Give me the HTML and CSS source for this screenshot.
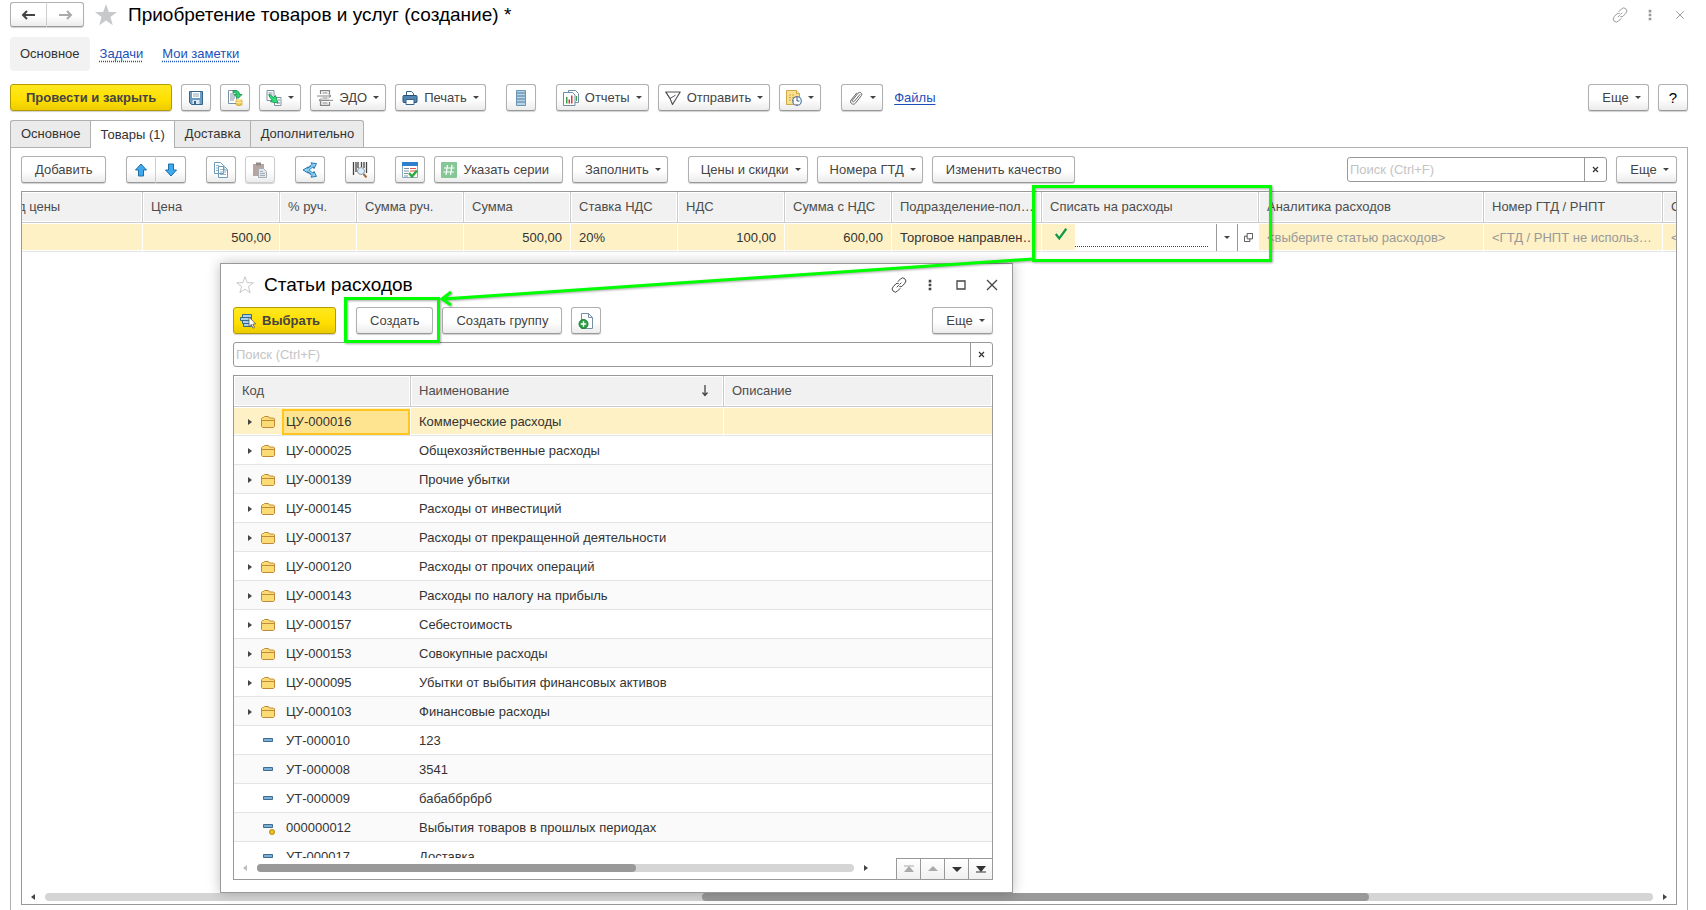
FILE: index.html
```html
<!DOCTYPE html>
<html lang="ru">
  <head>
    <meta charset="utf-8">
    <meta name="viewport" content="width=device-width">
    <title>Приобретение товаров и услуг (создание) *</title>
    <link rel="stylesheet" href="styles.css">
  </head>
  <body>
    <!-- icons -->
    <svg class="sprite" aria-hidden="true">
      <symbol id="i-left" viewBox="0 0 16 16"><path d="M2 8h12M6 4L2 8l4 4" fill="none" stroke="currentColor" stroke-width="2"/></symbol>
      <symbol id="i-right" viewBox="0 0 16 16"><path d="M2 8h12M10 4l4 4-4 4" fill="none" stroke="currentColor" stroke-width="2"/></symbol>
      <symbol id="i-star" viewBox="0 0 24 24"><path d="M12 1l2.800 7.900 8.200.2-6.500 5 2.300 8.200L12 17.500l-6.800 4.800 2.300-8.200L1 9.100l8.200-.2z"/></symbol>
      <symbol id="i-link" viewBox="0 0 16 16"><g fill="none" stroke="currentColor" stroke-linecap="round"><path d="M7 4.500l2.500-2.600a2.900 2.900 0 0 1 4.400 4.300L11.300 9a2.800 2.800 0 0 1-2.600.7"/><path d="M9 11.500l-2.500 2.600a2.900 2.900 0 0 1-4.400-4.300L4.700 7a2.800 2.800 0 0 1 2.600-.7M6 10l1.500-1.500M8.700 7.300L10 6"/></g></symbol>
      <symbol id="i-dots" viewBox="0 0 16 16"><path d="M6.500 2h3v3h-3zM6.500 6.500h3v3h-3zM6.500 11h3v3h-3z" fill="currentColor"/></symbol>
      <symbol id="i-close" viewBox="0 0 16 16"><path d="M3 3l10 10M13 3L3 13" stroke="currentColor" stroke-width="1.300"/></symbol>
      <symbol id="i-clear" viewBox="0 0 9 9"><path d="M2 2l5 5M7 2L2 7" stroke="currentColor" stroke-width="1.200"/></symbol>
      <symbol id="i-square" viewBox="0 0 16 16"><path d="M4 4h8v8H4z" fill="none" stroke="currentColor" stroke-width="1.300"/></symbol>
      <symbol id="i-save" viewBox="0 0 16 16"><path d="M1.500 1.500h13v13h-11l-2-2z" fill="#6d9cc0" stroke="#36658c"/><path d="M4 2h8v6H4z" fill="#fff"/><path d="M5 4h6M5 6h6" stroke="#8aa9c0"/><path d="M4.500 10h7v4h-7z" fill="#dce9f2"/><path d="M6 11h2v3H6z" fill="#36658c"/></symbol>
      <symbol id="i-post" viewBox="0 0 16 16"><path d="M1.500.5h8v13h-8z" fill="#fff" stroke="#7d92a3"/><path d="M3 4h4M3 6h5M3 8h5M3 10h4" stroke="#7d92a3"/><path d="M6 .7c5-.5 6.500 1.300 6.500 3.800H15l-4 4-4-4h2.500C9.500 3 8.500 2.500 6 3z" fill="#2fcf70" stroke="#0f8a45" stroke-width=".8"/><path d="M9 10v4.500c0 1.300 6 1.300 6 0V10z" fill="#f2c94f" stroke="#c29a26" stroke-width=".7"/><path d="M9 12c1 1 5 1 6 0" fill="none" stroke="#fff3c0"/><ellipse cx="12" cy="10" rx="3" ry="1" fill="#ffe58a"/></symbol>
      <symbol id="i-based" viewBox="0 0 16 16"><path d="M1 .5h7v10H1zM8.500 7.500h6.500v8H8.500z" fill="#fff" stroke="#7d92a3"/><path d="M2.500 3h4M2.500 5h4M12 10h2M11 13h3" stroke="#7d92a3"/><path d="M3 4l4.500 3.500L9.500 5.500 12 13l-7.500-1.200L6.300 9.700C4.200 8.700 3.300 7 3 4z" fill="#2fe07a" stroke="#0f8a45" stroke-width=".8"/></symbol>
      <symbol id="i-edo" viewBox="0 0 16 16"><path d="M3.500 4V.7h9V4M3.500 12v3.300h9V12" fill="none" stroke="#858585" stroke-width="1.200"/><path d="M5.500 3h5M5.500 8h5M5.500 13h5M4 10.300h8" stroke="#858585"/><path d="M0 6h14M11.500 4L14 6l-2.500 2M16 10.300H2M4.500 8.300L2 10.300l2.500 2" fill="none" stroke="#858585"/></symbol>
      <symbol id="i-print" viewBox="0 0 16 16"><path d="M4.500 6V1.500h5l2 2V6" fill="#fff" stroke="#34638c"/><rect x="1" y="5.500" width="14" height="7" rx="1" fill="#4f86b3" stroke="#284f73"/><path d="M4 9.500h8v5H4z" fill="#fff" stroke="#34638c"/></symbol>
      <symbol id="i-list" viewBox="0 0 16 16"><path d="M3.500.5h9v15h-9z" fill="#b7d3e6" stroke="#6b94b5"/><path d="M4 3h8M4 6h8M4 9h8M4 12h8" stroke="#527ea1" stroke-width="1.200"/></symbol>
      <symbol id="i-report" viewBox="0 0 16 16"><path d="M5.500 3V.5h7l3 3v9H12" fill="#fff" stroke="#6f8da4"/><path d="M.5 2.500h9l2.500 2.500v10.500H.5z" fill="#fff" stroke="#6f8da4"/><path d="M3 7h1.500v6.500H3z" fill="#35a34c"/><path d="M5.500 9.500H7v4H5.500z" fill="#d93b30"/><path d="M8 5.500h1.500v8H8z" fill="#d93b30"/><path d="M13.500 6v5" stroke="#35a34c"/></symbol>
      <symbol id="i-send" viewBox="0 0 16 16"><path d="M.8 2h14.400L7.500 14.500 5 8.500z" fill="none" stroke="#555" stroke-width="1.200" stroke-linejoin="round"/><path d="M.8 2L5 8.500l5.500-3.300" fill="none" stroke="#555"/></symbol>
      <symbol id="i-remind" viewBox="0 0 16 16"><path d="M.5.500h10l3 3v11H.5z" fill="#f8e08e" stroke="#cfa74c"/><path d="M10.500.5v3h3" fill="#fff3c4" stroke="#cfa74c"/><path d="M3 5h5M3 7.500h6M3 10h4" stroke="#cfa74c" stroke-dasharray="2 1"/><circle cx="11" cy="11" r="4.300" fill="#fff" stroke="#5580a8" stroke-width="1.200"/><path d="M11 8v3h2.500" fill="none" stroke="#315f89"/><path d="M10.500 7h1v1h-1zM10.500 14h1v1h-1zM7.200 10.500h1v1h-1z" fill="#e03030"/></symbol>
      <symbol id="i-clip" viewBox="0 0 16 16"><path d="M12 4.500L6.300 11.300c-1 1.200-2.600-.1-1.700-1.300l5.600-6.900c1.700-2 4.800.4 3.200 2.500l-6 7.600c-2.300 2.700-6.400-.4-4.200-3.300l5.500-6.800" fill="none" stroke="#666" stroke-linecap="round"/></symbol>
      <symbol id="i-up" viewBox="0 0 16 16"><path d="M8 2l5.500 6h-3v6h-5V8h-3z" fill="#3ea9ec" stroke="#1e6ea8"/></symbol>
      <symbol id="i-down" viewBox="0 0 16 16"><path d="M8 14l5.500-6h-3V2h-5v6h-3z" fill="#3ea9ec" stroke="#1e6ea8"/></symbol>
      <symbol id="i-copy" viewBox="0 0 16 16"><path d="M1.500.5h6l3 3v8h-9zM5.500 4.500h6l3 3v8h-9z" fill="#fff" stroke="#6c9bb8"/><path d="M11 4.500v3.500h3.500" fill="none" stroke="#6c9bb8"/><path d="M7 7.500h3M7 10h6M7 12.500h6M3 3.500h3M3 6h2M3 8.500h2" stroke="#8fb4ca"/></symbol>
      <symbol id="i-paste" viewBox="0 0 16 16"><path d="M1 2h11v12H1z" fill="#b5a79f"/><path d="M4 .5h5v3H4z" fill="#8f8a88"/><path d="M6.500 6.500h5l3 3v6h-8z" fill="#e2e6ea" stroke="#a5adb5"/><path d="M8 9.500h3M8 11.500h5M8 13.500h5" stroke="#a5adb5"/></symbol>
      <symbol id="i-share" viewBox="0 0 16 16"><path d="M5 8l5-4M5 8l5 4" fill="none" stroke="#2878ac" stroke-width="3.500"/><path d="M9 .8l5.500.8-2.500 5zM9 15.200l5.500-.8-2.500-5zM1 8l5-3v6z" fill="#8fd3f7" stroke="#2878ac"/><path d="M4 8h1.500L11 3.500M5.500 8l5.500 4.500" fill="none" stroke="#8fd3f7" stroke-width="1.500"/></symbol>
      <symbol id="i-barcode" viewBox="0 0 16 16"><path d="M1.500 0v13M4 0v10M6 0v6M9.500 0v5M12 0v6M14.500 0v11" stroke="#444" stroke-width="1.300"/><path d="M11.500 12l3 3.500" stroke="#a3683c" stroke-width="2"/><circle cx="9" cy="9" r="3.500" fill="#d9ecf8" stroke="#8d9aa5"/></symbol>
      <symbol id="i-check-list" viewBox="0 0 16 16"><path d="M.5.500h15v15H.5z" fill="#fff" stroke="#8da9be"/><path d="M0 0h16v4H0z" fill="#2f80cc"/><path d="M2 6.500h5M2 9h5M2 11.500h4M2 14h4" stroke="#7d92a3"/><path d="M8 6.500h6M8 9h6" stroke="#e25a46"/><path d="M7 11l3 3.500 5-6" fill="none" stroke="#2eaa3e" stroke-width="2.500"/></symbol>
      <symbol id="i-series" viewBox="0 0 16 16"><rect width="16" height="16" rx="1" fill="#86c796"/><path d="M6.500 3l-1.500 10M11 3L9.500 13M3 6h10.500M2.500 10H13" stroke="#fff" stroke-width="1.200"/></symbol>
      <symbol id="i-tick" viewBox="0 0 16 16"><path d="M2 8l4 5 8-11" fill="none" stroke="#0c9a48" stroke-width="2.500"/></symbol>
      <symbol id="i-open" viewBox="0 0 10 10"><path d="M3.500.5h6v6h-6zM3.500 3.500h-3v6h6v-3" fill="none" stroke="#444"/></symbol>
      <symbol id="i-choose" viewBox="0 0 16 16"><path d="M2.500 1.500h9v3h-9zM.5 4.500h11v3H.5zM2.500 7.500h9v3h-9zM3.500 10.500h8v3h-8z" fill="#a9d0ea" stroke="#356a91"/><path d="M9 4v9.500l2.300-2 1.700 3.700 1.500-.7-1.600-3.500h2.800z" fill="#fff" stroke="#555" stroke-width=".8"/></symbol>
      <symbol id="i-newdoc" viewBox="0 0 16 16"><path d="M3.500.5h7l4 4v11h-11z" fill="#fff" stroke="#7590a6"/><path d="M10.500.5v4h4" fill="none" stroke="#7590a6"/><circle cx="5.500" cy="11" r="4.500" fill="#2f9e49" stroke="#1c7a33"/><path d="M5.500 8.300v5.400M2.800 11h5.400" stroke="#fff" stroke-width="1.400"/></symbol>
      <symbol id="i-folder" viewBox="0 0 14 12"><path d="M.5 10.500v-8l1-1h1l1-1h4l1 1.500h4l1 1v7.500l-1 1h-11z" fill="#fbdc74" stroke="#c08a3a"/><path d="M1 4.500h12" stroke="#c08a3a"/></symbol>
      <symbol id="i-item" viewBox="0 0 14 14"><path d="M2.500 4.500h9v3h-9z" fill="#7db0d8" stroke="#3f6d92"/></symbol>
      <symbol id="i-item-pre" viewBox="0 0 14 14"><path d="M2.500 3.500h9v3h-9z" fill="#7db0d8" stroke="#3f6d92"/><circle cx="11" cy="11" r="2.500" fill="#f0c020" stroke="#b08a10"/></symbol>
      <symbol id="i-sort" viewBox="0 0 8 12"><path d="M4 0v10M1.500 7.500L4 10.500l2.500-3" fill="none" stroke="#444" stroke-width="1.300"/></symbol>
      <symbol id="i-first" viewBox="0 0 10 8"><path d="M0 1h10" stroke="currentColor"/><path d="M5 1l5 6H0z" fill="currentColor"/></symbol>
      <symbol id="i-prev" viewBox="0 0 10 8"><path d="M5 1l5 5H0z" fill="currentColor"/></symbol>
      <symbol id="i-next" viewBox="0 0 10 8"><path d="M5 7l5-5H0z" fill="currentColor"/></symbol>
      <symbol id="i-last" viewBox="0 0 10 8"><path d="M0 7h10" stroke="currentColor"/><path d="M5 7l5-6H0z" fill="currentColor"/></symbol>
    </svg>

    <header class="titlebar">
      <div class="btn-pair">
        <button class="btn" aria-label="Назад"><svg class="icon"><use href="#i-left"/></svg></button>
        <button class="btn muted" aria-label="Вперед"><svg class="icon"><use href="#i-right"/></svg></button>
      </div>
      <svg class="star"><use href="#i-star"/></svg>
      <h1>Приобретение товаров и услуг (создание) *</h1>
      <div class="win-icons pale">
        <button aria-label="Ссылка"><svg class="icon"><use href="#i-link"/></svg></button>
        <button aria-label="Меню"><svg class="icon small"><use href="#i-dots"/></svg></button>
        <button aria-label="Закрыть"><svg class="icon close"><use href="#i-close"/></svg></button>
      </div>
    </header>

    <nav class="sections">
      <span class="section-active">Основное</span>
      <a href="#">Задачи</a>
      <a href="#">Мои заметки</a>
    </nav>

    <div class="toolbar main-toolbar">
      <div class="group">
        <button class="btn btn-yellow">Провести и закрыть</button>
        <button class="btn btn-icon" aria-label="Записать"><svg class="icon"><use href="#i-save"/></svg></button>
        <button class="btn btn-icon" aria-label="Провести"><svg class="icon"><use href="#i-post"/></svg></button>
        <button class="btn with-icon drop" aria-label="Создать на основании"><svg class="icon"><use href="#i-based"/></svg></button>
        <button class="btn with-icon drop"><svg class="icon"><use href="#i-edo"/></svg>ЭДО</button>
        <button class="btn with-icon drop"><svg class="icon"><use href="#i-print"/></svg>Печать</button>
      </div>
      <div class="group">
        <button class="btn btn-icon" aria-label="Список"><svg class="icon"><use href="#i-list"/></svg></button>
      </div>
      <div class="group">
        <button class="btn with-icon drop"><svg class="icon"><use href="#i-report"/></svg>Отчеты</button>
        <button class="btn with-icon drop"><svg class="icon"><use href="#i-send"/></svg>Отправить</button>
        <button class="btn with-icon drop" aria-label="Напоминание"><svg class="icon"><use href="#i-remind"/></svg></button>
      </div>
      <div class="group">
        <button class="btn with-icon drop" aria-label="Вложения"><svg class="icon"><use href="#i-clip"/></svg></button>
        <a class="files" href="#">Файлы</a>
      </div>
      <div class="group push">
        <button class="btn drop">Еще</button>
        <button class="btn btn-icon help">?</button>
      </div>
    </div>

    <div class="tabs">
      <button class="tab">Основное</button>
      <button class="tab tab-active">Товары (1)</button>
      <button class="tab">Доставка</button>
      <button class="tab">Дополнительно</button>
    </div>

    <main class="panel">
      <div class="toolbar">
        <div class="group">
          <button class="btn">Добавить</button>
        </div>
        <div class="btn-pair">
          <button class="btn" aria-label="Вверх"><svg class="icon"><use href="#i-up"/></svg></button>
          <button class="btn" aria-label="Вниз"><svg class="icon"><use href="#i-down"/></svg></button>
        </div>
        <div class="group">
          <button class="btn btn-icon" aria-label="Копировать"><svg class="icon"><use href="#i-copy"/></svg></button>
          <button class="btn btn-icon" aria-label="Вставить" disabled><svg class="icon"><use href="#i-paste"/></svg></button>
        </div>
        <div class="group">
          <button class="btn btn-icon" aria-label="Разбить строку"><svg class="icon"><use href="#i-share"/></svg></button>
        </div>
        <div class="group">
          <button class="btn btn-icon" aria-label="Поиск по штрихкоду"><svg class="icon"><use href="#i-barcode"/></svg></button>
        </div>
        <div class="group">
          <button class="btn btn-icon" aria-label="Проверить"><svg class="icon"><use href="#i-check-list"/></svg></button>
          <button class="btn with-icon"><svg class="icon"><use href="#i-series"/></svg>Указать серии</button>
          <button class="btn drop">Заполнить</button>
        </div>
        <div class="group">
          <button class="btn drop">Цены и скидки</button>
          <button class="btn drop">Номера ГТД</button>
          <button class="btn">Изменить качество</button>
        </div>
        <div class="group push">
          <div class="search search-goods">
            <input type="text" placeholder="Поиск (Ctrl+F)" aria-label="Поиск товаров">
            <button aria-label="Очистить"><svg class="icon tiny"><use href="#i-clear"/></svg></button>
          </div>
          <button class="btn drop">Еще</button>
        </div>
      </div>

      <div class="grid-box goods">
        <div class="grid-view">
          <table class="grid goods-table">
            <colgroup>
              <col style="width: 149px"><col style="width: 137px"><col style="width: 77px"><col style="width: 107px"><col style="width: 107px"><col style="width: 107px"><col style="width: 107px"><col style="width: 107px"><col style="width: 150px"><col style="width: 217px"><col style="width: 225px"><col style="width: 179px"><col style="width: 150px">
            </colgroup>
            <thead>
              <tr><th>Вид цены</th><th>Цена</th><th>% руч.</th><th>Сумма руч.</th><th>Сумма</th><th>Ставка НДС</th><th>НДС</th><th>Сумма с НДС</th><th class="tight">Подразделение-получатель</th><th>Списать на расходы</th><th>Аналитика расходов</th><th>Номер ГТД / РНПТ</th><th>Страна</th></tr>
            </thead>
            <tbody>
              <tr class="selected">
                <td></td><td class="num">500,00</td><td></td><td></td><td class="num">500,00</td><td>20%</td><td class="num">100,00</td><td class="num">600,00</td><td class="tight">Торговое направление (опт)</td>
                <td class="edit-cell">
                  <div class="editor">
                    <span class="tick"><svg class="icon small"><use href="#i-tick"/></svg></span>
                    <label class="field"><input type="text" aria-label="Списать на расходы"></label>
                    <button class="drop" aria-label="Выбрать из списка"></button>
                    <button aria-label="Открыть"><svg class="icon tiny"><use href="#i-open"/></svg></button>
                  </div>
                </td>
                <td class="hint">&lt;выберите статью расходов&gt;</td><td class="hint">&lt;ГТД / РНПТ не используется&gt;</td><td class="hint">&lt;не указана&gt;</td>
              </tr>
            </tbody>
          </table>
        </div>
        <div class="scrollbar">
          <i class="arrow-left"></i>
          <div class="track"><div class="thumb" style="margin-left: 657px; width: 667px"></div></div>
          <i class="arrow-right"></i>
        </div>
      </div>
    </main>

    <section class="dialog">
      <div class="dialog-title">
        <svg class="star star-empty"><use href="#i-star"/></svg>
        <h2>Статьи расходов</h2>
        <div class="win-icons">
          <button aria-label="Ссылка"><svg class="icon"><use href="#i-link"/></svg></button>
          <button aria-label="Меню"><svg class="icon small"><use href="#i-dots"/></svg></button>
          <button aria-label="Развернуть"><svg class="icon"><use href="#i-square"/></svg></button>
          <button aria-label="Закрыть"><svg class="icon"><use href="#i-close"/></svg></button>
        </div>
      </div>
      <div class="toolbar">
        <div class="group">
          <button class="btn btn-yellow with-icon"><svg class="icon"><use href="#i-choose"/></svg>Выбрать</button>
        </div>
        <div class="group">
          <button class="btn">Создать</button>
          <button class="btn">Создать группу</button>
          <button class="btn btn-icon" aria-label="Создать копированием"><svg class="icon"><use href="#i-newdoc"/></svg></button>
        </div>
        <div class="group push">
          <button class="btn drop">Еще</button>
        </div>
      </div>
      <div class="search">
        <input type="text" placeholder="Поиск (Ctrl+F)" aria-label="Поиск статей">
        <button aria-label="Очистить"><svg class="icon tiny"><use href="#i-clear"/></svg></button>
      </div>
      <div class="grid-box">
        <div class="grid-view list-view">
          <table class="grid list-table">
            <colgroup><col style="width: 177px"><col style="width: 313px"><col></colgroup>
            <thead>
              <tr><th>Код</th><th><div class="sorted">Наименование<svg><use href="#i-sort"/></svg></div></th><th>Описание</th></tr>
            </thead>
            <tbody>
              <tr class="selected"><td><div class="code"><i class="arrow-right"></i><svg><use href="#i-folder"/></svg><span>ЦУ-000016</span></div></td><td>Коммерческие расходы</td><td></td></tr>
              <tr><td><div class="code"><i class="arrow-right"></i><svg><use href="#i-folder"/></svg><span>ЦУ-000025</span></div></td><td>Общехозяйственные расходы</td><td></td></tr>
              <tr><td><div class="code"><i class="arrow-right"></i><svg><use href="#i-folder"/></svg><span>ЦУ-000139</span></div></td><td>Прочие убытки</td><td></td></tr>
              <tr><td><div class="code"><i class="arrow-right"></i><svg><use href="#i-folder"/></svg><span>ЦУ-000145</span></div></td><td>Расходы от инвестиций</td><td></td></tr>
              <tr><td><div class="code"><i class="arrow-right"></i><svg><use href="#i-folder"/></svg><span>ЦУ-000137</span></div></td><td>Расходы от прекращенной деятельности</td><td></td></tr>
              <tr><td><div class="code"><i class="arrow-right"></i><svg><use href="#i-folder"/></svg><span>ЦУ-000120</span></div></td><td>Расходы от прочих операций</td><td></td></tr>
              <tr><td><div class="code"><i class="arrow-right"></i><svg><use href="#i-folder"/></svg><span>ЦУ-000143</span></div></td><td>Расходы по налогу на прибыль</td><td></td></tr>
              <tr><td><div class="code"><i class="arrow-right"></i><svg><use href="#i-folder"/></svg><span>ЦУ-000157</span></div></td><td>Себестоимость</td><td></td></tr>
              <tr><td><div class="code"><i class="arrow-right"></i><svg><use href="#i-folder"/></svg><span>ЦУ-000153</span></div></td><td>Совокупные расходы</td><td></td></tr>
              <tr><td><div class="code"><i class="arrow-right"></i><svg><use href="#i-folder"/></svg><span>ЦУ-000095</span></div></td><td>Убытки от выбытия финансовых активов</td><td></td></tr>
              <tr><td><div class="code"><i class="arrow-right"></i><svg><use href="#i-folder"/></svg><span>ЦУ-000103</span></div></td><td>Финансовые расходы</td><td></td></tr>
              <tr><td><div class="code leaf"><svg><use href="#i-item"/></svg><span>УТ-000010</span></div></td><td>123</td><td></td></tr>
              <tr><td><div class="code leaf"><svg><use href="#i-item"/></svg><span>УТ-000008</span></div></td><td>3541</td><td></td></tr>
              <tr><td><div class="code leaf"><svg><use href="#i-item"/></svg><span>УТ-000009</span></div></td><td>бабаббрбрб</td><td></td></tr>
              <tr><td><div class="code leaf"><svg><use href="#i-item-pre"/></svg><span>000000012</span></div></td><td>Выбытия товаров в прошлых периодах</td><td></td></tr>
              <tr><td><div class="code leaf"><svg><use href="#i-item"/></svg><span>УТ-000017</span></div></td><td>Доставка</td><td></td></tr>
            </tbody>
          </table>
        </div>
        <div class="list-footer">
          <div class="scrollbar">
            <i class="arrow-left off"></i>
            <div class="track"><div class="thumb" style="width: 379px"></div></div>
            <i class="arrow-right"></i>
          </div>
          <div class="pager">
            <button aria-label="В начало" disabled><svg><use href="#i-first"/></svg></button>
            <button aria-label="Назад" disabled><svg><use href="#i-prev"/></svg></button>
            <button aria-label="Далее"><svg><use href="#i-next"/></svg></button>
            <button aria-label="В конец"><svg><use href="#i-last"/></svg></button>
          </div>
        </div>
      </div>
    </section>

    <!-- green marks over the form -->
    <svg class="marks" aria-hidden="true">
      <rect x="1033.500" y="186.500" width="237" height="74"/>
      <rect x="345.500" y="298.500" width="93" height="43"/>
      <path d="M1033 259L443 299M451 292l-9 7 9 6"/>
    </svg>
  </body>
</html>
```

FILE: styles.css
```css
* {
  margin: 0;
  box-sizing: border-box;
}
body {
  min-height: 100vh;
  display: flex;
  flex-direction: column;
  padding: 0 18px 0 10px;
  background-color: white;
  color: #333333;
  font-family: "Liberation Sans", Arial, sans-serif;
  font-size: 13px;
  line-height: 16px;
  position: relative;
  overflow: hidden;
}
button, input {
  font: inherit;
  color: inherit;
}
button {
  cursor: pointer;
}
a {
  color: #1d4fb8;
}
h1, h2 {
  font-size: 19px;
  line-height: 24px;
  font-weight: 400;
  color: black;
}
.sprite {
  position: absolute;
  width: 0;
  height: 0;
}
.icon {
  width: 16px;
  height: 16px;
  flex-shrink: 0;
}
.icon.small {
  width: 14px;
  height: 14px;
}
.icon.close {
  width: 12px;
  height: 12px;
}
.icon.tiny {
  width: 9px;
  height: 9px;
}

/* buttons */
.btn {
  height: 27px;
  padding: 0 13px;
  display: flex;
  align-items: center;
  justify-content: center;
  border: 1px solid #b0b0b0;
  border-bottom-color: #999999;
  border-radius: 3px;
  background: linear-gradient(white 55%, #ececec);
  box-shadow: 0 1px 1px #d0d0d0;
  color: #444444;
  white-space: nowrap;
}
.btn-icon {
  width: 30px;
  padding: 0;
}
.btn.drop {
  padding: 0 6px 0 12px;
}
.btn.with-icon {
  padding-left: 6px;
  gap: 6px;
}
.push .btn.drop {
  width: 61px;
}
.drop::after {
  content: "";
  border: 3px solid transparent;
  border-top-color: #444444;
  border-bottom: 0;
  margin-left: 6px;
}
.drop.with-icon::after {
  margin-left: 0;
}
.btn:disabled {
  border-color: #cccccc;
}
.btn-yellow {
  padding: 0 15px;
  border-color: #b59b00;
  background: linear-gradient(#ffe81f, #ffdf00 60%, #eccb00);
  font-weight: 700;
}
.help {
  font-size: 15px;
  color: black;
}
.muted {
  color: #aaaaaa;
}
.btn-pair {
  display: flex;
}
.btn-pair .btn {
  width: 30px;
  padding: 0;
  border-radius: 0 3px 3px 0;
}
.btn-pair .btn:first-child {
  border-right: 1px solid #cccccc;
  border-radius: 3px 0 0 3px;
}
.btn-pair .btn:last-child {
  border-left: 0;
}

/* title */
.titlebar {
  height: 29px;
  display: flex;
  align-items: center;
}
.titlebar .btn-pair .btn {
  width: 37px;
  height: 25px;
}
.star {
  width: 24px;
  height: 24px;
  margin: 0 10px;
  fill: #c8c9cb;
}
.star-empty {
  width: 18px;
  height: 18px;
  margin: 0 10px 0 3px;
  fill: none;
  stroke: #b5b5b5;
}
.win-icons {
  margin-left: auto;
  display: flex;
  align-items: center;
  gap: 9px;
}
.win-icons button {
  width: 22px;
  height: 22px;
  padding: 0;
  display: flex;
  align-items: center;
  justify-content: center;
  border: 0;
  background: none;
  color: #444444;
}
.win-icons.pale {
  gap: 8px;
  margin-right: -3px;
}
.win-icons.pale button {
  color: #999999;
}
.sections {
  margin-top: 8px;
  display: flex;
  align-items: center;
}
.sections a {
  margin-left: 19px;
  text-decoration: underline dotted;
  text-underline-offset: 3px;
}
.section-active {
  padding: 9px 10px;
  border-radius: 4px;
  background-color: #f2f2f2;
}
.sections .section-active + a {
  margin-left: 10px;
}

/* toolbars */
.toolbar {
  display: flex;
  align-items: center;
  gap: 20px;
}
.group {
  display: flex;
  align-items: center;
  gap: 9px;
}
.push {
  margin-left: auto;
}
.main-toolbar {
  margin-top: 13px;
}
.files {
  margin-left: 2px;
  text-underline-offset: 2px;
}

/* tabs */
.tabs {
  margin-top: 9px;
  display: flex;
}
.tab {
  height: 27px;
  padding: 0 9px 0 10px;
  border: 1px solid #b0b0b0;
  border-bottom: 0;
  border-right: 0;
  background-color: #ebebeb;
}
.tab:first-child {
  border-radius: 3px 0 0 0;
}
.tab:last-child {
  border-right: 1px solid #b0b0b0;
  border-radius: 0 3px 0 0;
}
.tab-active {
  height: 28px;
  margin-bottom: -1px;
  background-color: white;
  position: relative;
}
.panel {
  flex-grow: 1;
  display: flex;
  flex-direction: column;
  padding: 8px 10px 5px;
  border: 1px solid #b0b0b0;
  border-bottom: 0;
}

/* search */
.search {
  height: 25px;
  display: flex;
  border: 1px solid #999999;
  border-radius: 3px;
}
.search-goods {
  width: 260px;
}
.search input {
  flex-grow: 1;
  min-width: 0;
  padding: 0 2px;
  border: 0;
  outline: none;
  background: none;
}
.search input::placeholder {
  color: #c4c4c4;
}
.search button {
  width: 22px;
  padding: 0;
  border: 0;
  border-left: 1px solid #999999;
  background: none;
}

/* tables */
.grid-box {
  display: flex;
  flex-direction: column;
  border: 1px solid #999999;
}
.goods {
  flex-grow: 1;
  margin-top: 8px;
}
.grid-view {
  flex-grow: 1;
  overflow: hidden;
}
.grid {
  table-layout: fixed;
  border-collapse: separate;
  border-spacing: 0;
}
.goods-table {
  width: 1819px;
  margin-left: -28px;
}
.list-table {
  width: 100%;
}
.grid th, .grid td {
  padding: 0 8px;
  text-align: left;
  font-weight: 400;
  white-space: nowrap;
  overflow: hidden;
  text-overflow: ellipsis;
}
.grid th {
  height: 31px;
  border-right: 1px solid #cccccc;
  border-bottom: 1px solid #cccccc;
  background-color: #f1f1f1;
  box-shadow: inset 1px 1px 0 white, inset -1px -1px 0 white;
  color: #4d4d4d;
}
.grid td {
  height: 29px;
  padding-top: 1px;
  border-bottom: 1px solid #e4e4e4;
}
.grid tr:nth-child(odd) td {
  background-color: #fafafa;
}
.grid tr.selected td {
  border-right: 1px solid white;
  background-color: #fdf1c5;
  box-shadow: inset 0 1px 0 white, inset 0 -1px 0 white;
}
.list-table th:last-child, .list-table tr.selected td:last-child {
  border-right: 0;
}
.grid .tight {
  padding-right: 3px;
}
.grid .num {
  text-align: right;
}
.grid .hint {
  color: #999999;
}
.grid .edit-cell {
  padding: 0;
}
.editor {
  height: 27px;
  display: flex;
}
.tick {
  width: 33px;
  flex-shrink: 0;
  padding: 3px 0 0 12px;
}
.field {
  flex-grow: 1;
  min-width: 0;
  padding: 0 8px 4px 0;
  background-color: white;
}
.field input {
  width: 100%;
  height: 23px;
  padding: 0;
  border: 0;
  border-bottom: 1px dotted #e00000;
  outline: none;
}
.editor button {
  width: 21px;
  flex-shrink: 0;
  padding: 0;
  display: flex;
  align-items: center;
  justify-content: center;
  border: 0;
  border-left: 1px solid #999999;
  background-color: white;
}
.editor .drop::after {
  margin: 0;
}

/* scrollbars */
.scrollbar {
  height: 10px;
  flex-grow: 1;
  display: flex;
  align-items: center;
}
.goods .scrollbar {
  flex-grow: 0;
  height: 14px;
  padding: 0 9px;
}
.track {
  flex-grow: 1;
  height: 8px;
  margin: 0 10px;
  border-radius: 4px;
  background-color: #d5d5d5;
}
.thumb {
  height: 8px;
  border-radius: 4px;
  background-color: #999999;
}
.arrow-left, .arrow-right {
  border: 3px solid transparent;
  flex-shrink: 0;
}
.arrow-left {
  border-right: 4px solid #444444;
  border-left: 0;
}
.arrow-left.off {
  border-right-color: #bbbbbb;
}
.arrow-right {
  border-left: 4px solid #444444;
  border-right: 0;
}

/* dialog window */
.dialog {
  width: 793px;
  padding: 7px 19px 12px 12px;
  position: absolute;
  left: 220px;
  top: 263px;
  border: 1px solid #999999;
  background-color: white;
  box-shadow: 0 0 12px rgba(0, 0, 0, 0.25);
}
.dialog-title {
  height: 28px;
  display: flex;
  align-items: center;
}
.dialog-title .win-icons {
  margin-right: -10px;
}
.dialog > .toolbar {
  margin-top: 8px;
}
.dialog > .search {
  margin-top: 8px;
}
.dialog > .grid-box {
  margin-top: 8px;
}
.list-view {
  height: 482px;
}
.sorted {
  display: flex;
  justify-content: space-between;
  align-items: center;
  padding-right: 6px;
}
.sorted svg {
  width: 8px;
  height: 12px;
}
.list-table td:first-child {
  padding: 1px 0 0 14px;
}
.code {
  height: 26px;
  display: flex;
  align-items: center;
}
.code svg {
  width: 14px;
  height: 14px;
  margin: 0 7px 0 9px;
}
.code.leaf svg {
  margin-left: 13px;
}
.code span {
  flex-grow: 1;
  padding: 3px 2px;
  border: 2px solid transparent;
}
.selected .code span {
  border-color: #ffc61f;
  background-color: #fee491;
}
.list-footer {
  display: flex;
  height: 21px;
}
.list-footer .scrollbar {
  height: 19px;
  padding-left: 9px;
}
.pager {
  display: flex;
  margin: 0 -1px -1px 29px;
}
.pager button {
  width: 25px;
  height: 22px;
  margin-left: -1px;
  padding: 0;
  display: flex;
  align-items: center;
  justify-content: center;
  border: 1px solid #999999;
  background: linear-gradient(white, #f0f0f0);
}
.pager button:disabled {
  color: #aaaaaa;
}
.pager svg {
  width: 10px;
  height: 8px;
}

.marks {
  width: 100%;
  height: 100%;
  position: absolute;
  left: 0;
  top: 0;
  pointer-events: none;
  fill: none;
  stroke: #00ff00;
  stroke-width: 3;
  filter: drop-shadow(1px 1px 1px rgba(0, 0, 0, 0.35));
}
```
